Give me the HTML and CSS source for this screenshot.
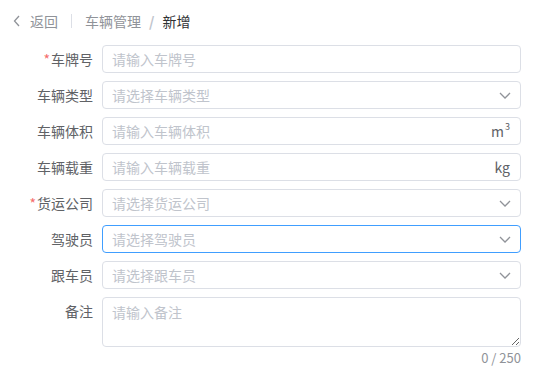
FILE: index.html
```html
<!DOCTYPE html>
<html lang="zh-CN">
<head>
  <meta charset="UTF-8" />
  <title>车辆管理 - 新增</title>
  <link rel="stylesheet" href="styles.css">
</head>
<body>

  <div class="header">
    <a class="back" href="#">
      <svg class="back-icon" viewBox="0 0 8 12" width="8" height="12"><polyline points="6,1 1.5,6 6,11" fill="none" stroke="currentColor" stroke-width="1.3"/></svg>
      返回
    </a>
    <span class="divider"></span>
    <span class="crumb">车辆管理</span>
    <span class="sep">/</span>
    <span class="crumb current">新增</span>
  </div>

  <form class="form" autocomplete="off">
    <div class="row">
      <label class="label required">车牌号</label>
      <div class="field"><input class="input" placeholder="请输入车牌号"></div>
    </div>
    <div class="row">
      <label class="label">车辆类型</label>
      <div class="field select">
        <input class="input" placeholder="请选择车辆类型" readonly>
        <svg class="arrow" viewBox="0 0 12 7" width="12" height="7"><polyline points="1,1 6,6 11,1" fill="none" stroke="currentColor" stroke-width="1.3"/></svg>
      </div>
    </div>
    <div class="row">
      <label class="label">车辆体积</label>
      <div class="field">
        <input class="input" placeholder="请输入车辆体积">
        <span class="suffix">m<sup>3</sup></span>
      </div>
    </div>
    <div class="row">
      <label class="label">车辆载重</label>
      <div class="field">
        <input class="input" placeholder="请输入车辆载重">
        <span class="suffix">kg</span>
      </div>
    </div>
    <div class="row">
      <label class="label required">货运公司</label>
      <div class="field select">
        <input class="input" placeholder="请选择货运公司" readonly>
        <svg class="arrow" viewBox="0 0 12 7" width="12" height="7"><polyline points="1,1 6,6 11,1" fill="none" stroke="currentColor" stroke-width="1.3"/></svg>
      </div>
    </div>
    <div class="row">
      <label class="label">驾驶员</label>
      <div class="field select">
        <input class="input focus" placeholder="请选择驾驶员" readonly>
        <svg class="arrow" viewBox="0 0 12 7" width="12" height="7"><polyline points="1,1 6,6 11,1" fill="none" stroke="currentColor" stroke-width="1.3"/></svg>
      </div>
    </div>
    <div class="row">
      <label class="label">跟车员</label>
      <div class="field select">
        <input class="input" placeholder="请选择跟车员" readonly>
        <svg class="arrow" viewBox="0 0 12 7" width="12" height="7"><polyline points="1,1 6,6 11,1" fill="none" stroke="currentColor" stroke-width="1.3"/></svg>
      </div>
    </div>
    <div class="row">
      <label class="label">备注</label>
      <div class="field">
        <textarea class="textarea" placeholder="请输入备注" maxlength="250"></textarea>
        <div class="count">0 / 250</div>
      </div>
    </div>
  </form>

</body>
</html>
```

FILE: styles.css
```css
:root{
  --text:#606266;
  --dark:#303133;
  --muted:#909399;
  --placeholder:#c0c4cc;
  --border:#dcdfe6;
  --primary:#409eff;
}
*{box-sizing:border-box;margin:0;padding:0}
body{
  font-family:"Noto Sans CJK SC","Noto Sans",sans-serif;
  font-size:14px;
  color:var(--text);
  background:#fff;
}
.header{
  height:42px;
  display:flex;
  align-items:center;
  padding-left:13px;
  padding-bottom:1px;
}
.back{
  display:flex;
  align-items:center;
  gap:9px;
  color:var(--muted);
  text-decoration:none;
}
.back-icon{color:var(--muted)}
.divider{
  width:1px;
  height:14px;
  background:var(--border);
  margin:0 13px 0 13px;
}
.crumb{color:var(--muted)}
.current{color:var(--dark)}
.sep{color:var(--placeholder);margin:0 8px;font-weight:700}

.form{padding-top:3px}
.row{
  display:flex;
  margin-bottom:8px;
}
.label{
  width:102px;
  flex:none;
  text-align:right;
  padding-right:9px;
  line-height:28px;
  color:var(--text);
}
.required::before{
  content:"*";
  color:#f56c6c;
  margin-right:1px;
}
.field{
  position:relative;
  width:419px;
}
.input{
  display:block;
  width:100%;
  height:28px;
  border:1px solid var(--border);
  border-radius:4px;
  padding:0 30px 0 9px;
  font:inherit;
  color:var(--text);
  outline:none;
}
.input::placeholder,.textarea::placeholder{color:var(--placeholder)}
.input.focus{border-color:var(--primary)}
.arrow{
  position:absolute;
  right:10px;
  top:11px;
  color:var(--muted);
}
.suffix{
  position:absolute;
  right:11px;
  top:0;
  line-height:28px;
  color:var(--text);
}
.suffix sup{font-size:9px;vertical-align:7px;line-height:0;margin-left:1px}
.textarea{
  display:block;
  width:100%;
  height:50px;
  border:1px solid var(--border);
  border-radius:4px;
  padding:3px 9px;
  font:inherit;
  line-height:22px;
  color:var(--text);
  outline:none;
}
.count{
  text-align:right;
  font-size:13px;
  color:var(--muted);
  line-height:22px;
}
```
